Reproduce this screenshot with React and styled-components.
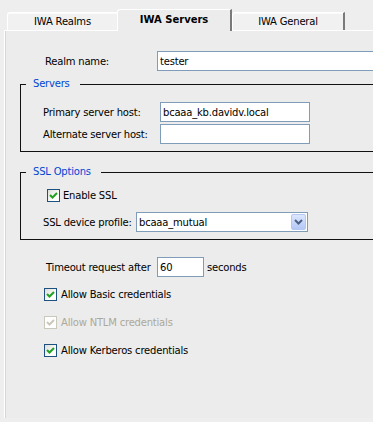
import React from 'react';
import styled, { createGlobalStyle } from 'styled-components';

const Global = createGlobalStyle`
  html, body { margin: 0; padding: 0; background: #EEEEEE; }
  body {
    font-family: "DejaVu Sans", Verdana, sans-serif;
    font-size: 10px;
    letter-spacing: -0.2px;
    color: #000;
  }
  * { box-sizing: border-box; }
`;

const Window = styled.div`
  width: 373px;
  height: 422px;
  overflow: hidden;
  background: #EEEEEE;
  padding-left: 4px;
  display: flex;
  flex-direction: column;
`;

const TabStrip = styled.div`
  display: flex;
  align-items: flex-end;
  height: 30px;
  padding-left: 3px;
  position: relative;
  z-index: 2;
`;

const Tab = styled.div`
  width: ${p => p.$w}px;
  height: ${p => (p.$active ? 22 : 18)}px;
  margin-bottom: ${p => (p.$active ? -1 : 0)}px;
  display: flex;
  align-items: center;
  justify-content: center;
  padding-bottom: ${p => (p.$active ? 3 : 0)}px;
  background: ${p => (p.$active ? '#ECECEC' : '#F1F1F1')};
  border-top: 1px solid #FFFFFF;
  border-left: 1px solid #FFFFFF;
  border-right: ${p => (p.$hideRight ? '0' : '2px solid #7A7A7A')};
  border-top-left-radius: 3px;
  box-shadow: ${p => (p.$active ? 'none' : 'inset 0 1px 0 #FAFAFA')};
  font-weight: ${p => (p.$active ? 'bold' : 'normal')};
  letter-spacing: ${p => (p.$active ? '0' : '-0.2px')};
  white-space: nowrap;
`;

const Panel = styled.div`
  flex: 1;
  margin-bottom: 4px;
  width: 420px;
  background: #ECECEC;
  border-top: 1px solid #FFFFFF;
  border-left: 1px solid #FFFFFF;
  box-shadow: inset 1px 0 0 #D6D6D6;
  display: flex;
  flex-direction: column;
`;

const FieldRow = styled.div`
  display: flex;
  align-items: center;
  margin-top: ${p => p.$mt || 0}px;
  padding-left: ${p => p.$pl || 0}px;
  height: ${p => p.$h || 20}px;
`;

const Label = styled.span`
  width: ${p => p.$w}px;
  flex: none;
  white-space: nowrap;
`;

const TextBox = styled.div`
  width: ${p => p.$w}px;
  height: 20px;
  flex: none;
  border: 1px solid #7F9DB9;
  background: #FFFFFF;
  padding: 0 0 0 2px;
  display: flex;
  align-items: center;
  white-space: nowrap;
  overflow: hidden;
`;

const Group = styled.fieldset`
  margin: ${p => p.$mt}px 0 0 15px;
  padding: 0 0 7px 0;
  border: 1px solid #111111;
  min-width: 0;
  width: 400px;
`;

const Legend = styled.legend`
  margin-left: 5px;
  padding: 0 10px 0 7px;
  line-height: 12px;
  color: #0046D5;
`;

const CheckBox = styled.span`
  width: 13px;
  height: 13px;
  flex: none;
  border: 1px solid ${p => (p.$disabled ? '#CAC8BB' : '#1C5180')};
  background: ${p => (p.$disabled ? '#FFFFFF' : 'linear-gradient(135deg, #DCDCD7 0%, #FFFFFF 70%)')};
  display: flex;
  align-items: center;
  justify-content: center;
  margin-right: ${p => p.$gap}px;
`;

const CheckLabel = styled.span`
  color: ${p => (p.$disabled ? '#ACA899' : '#000')};
  white-space: nowrap;
`;

const Select = styled.div`
  width: ${p => p.$w}px;
  height: 20px;
  flex: none;
  border: 1px solid #7F9DB9;
  background: #FFFFFF;
  display: flex;
  align-items: center;
  justify-content: space-between;
  padding: 1px;
`;

const SelectText = styled.span`
  padding-left: 1px;
`;

const DropButton = styled.span`
  width: 15px;
  height: 16px;
  border: 1px solid #B5C8F3;
  border-radius: 2px;
  background: linear-gradient(180deg, #DDE7FD 0%, #C3D4FA 60%, #B4C8F6 100%);
  display: flex;
  align-items: center;
  justify-content: center;
`;

const Unit = styled.span`
  margin-left: 3px;
`;

function Check({ disabled, gap = 4 }) {
  const c = disabled ? '#CAC8BB' : '#21A121';
  return (
    <CheckBox $disabled={disabled} $gap={gap}>
      <svg width="9" height="9" viewBox="0 0 9 9">
        <path d="M1 4 L3.5 6.5 L8 2" fill="none" stroke={c} strokeWidth="2" />
      </svg>
    </CheckBox>
  );
}

export default function App() {
  return (
    <>
      <Global />
      <Window>
        <TabStrip>
          <Tab $w={110} $hideRight>IWA Realms</Tab>
          <Tab $w={115} $active>IWA Servers</Tab>
          <Tab $w={113}>IWA General</Tab>
        </TabStrip>
        <Panel>
          <FieldRow $mt={20} $pl={40}>
            <Label $w={112}>Realm name:</Label>
            <TextBox $w={260}>tester</TextBox>
          </FieldRow>

          <Group $mt={7}>
            <Legend>Servers</Legend>
            <FieldRow $mt={12} $pl={22}>
              <Label $w={117}>Primary server host:</Label>
              <TextBox $w={150}>bcaaa_kb.davidv.local</TextBox>
            </FieldRow>
            <FieldRow $mt={2} $pl={22}>
              <Label $w={117}>Alternate server host:</Label>
              <TextBox $w={150} />
            </FieldRow>
          </Group>

          <Group $mt={14}>
            <Legend>SSL Options</Legend>
            <FieldRow $mt={11} $pl={26} $h={13}>
              <Check gap={3} />
              <CheckLabel>Enable SSL</CheckLabel>
            </FieldRow>
            <FieldRow $mt={10} $pl={22}>
              <Label $w={93}>SSL device profile:</Label>
              <Select $w={172}>
                <SelectText>bcaaa_mutual</SelectText>
                <DropButton>
                  <svg width="9" height="6" viewBox="0 0 9 6">
                    <path d="M1 1 L4.5 4.5 L8 1" fill="none" stroke="#4D6185" strokeWidth="2" />
                  </svg>
                </DropButton>
              </Select>
            </FieldRow>
          </Group>

          <FieldRow $mt={17} $pl={41}>
            <Label $w={111}>Timeout request after</Label>
            <TextBox $w={47}>60</TextBox>
            <Unit>seconds</Unit>
          </FieldRow>

          <FieldRow $mt={11} $pl={39} $h={13}>
            <Check />
            <CheckLabel>Allow Basic credentials</CheckLabel>
          </FieldRow>
          <FieldRow $mt={15} $pl={39} $h={13}>
            <Check disabled />
            <CheckLabel $disabled>Allow NTLM credentials</CheckLabel>
          </FieldRow>
          <FieldRow $mt={15} $pl={39} $h={13}>
            <Check />
            <CheckLabel>Allow Kerberos credentials</CheckLabel>
          </FieldRow>
        </Panel>
      </Window>
    </>
  );
}
